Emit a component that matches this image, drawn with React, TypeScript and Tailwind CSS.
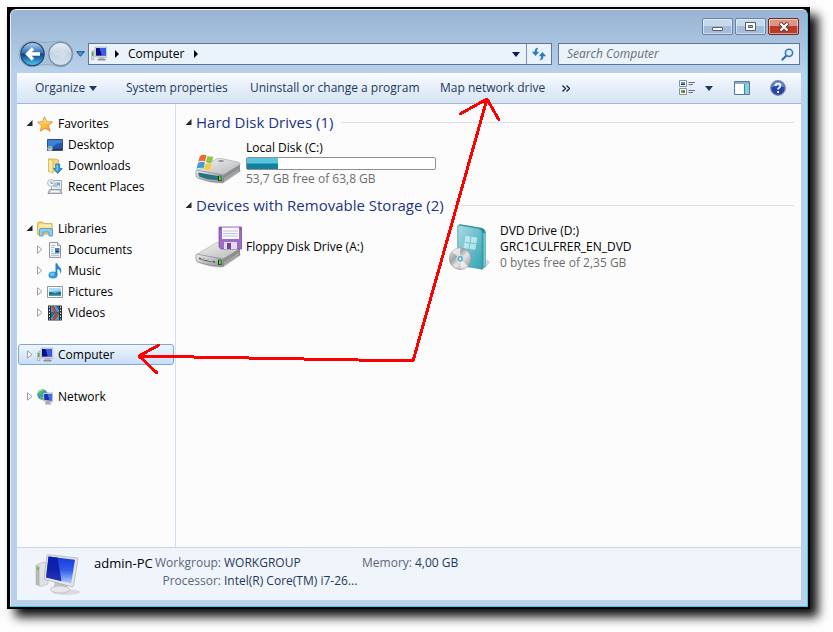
import type { ReactNode } from "react";

const Tri = ({ open = false }: { open?: boolean }) => (
  <svg className="shrink-0" width="7" height="9" viewBox="0 0 7 9" aria-hidden="true">
    {open ? (
      <path d="M6.500 1v6H.5z" fill="#262626" />
    ) : (
      <path d="M1.500 .8v7.400L6 4.500z" fill="#fff" stroke="#a0a0a0" />
    )}
  </svg>
);

const RightArrow = () => (
  <svg className="shrink-0" width="4" height="8" viewBox="0 0 4 8" aria-hidden="true">
    <path d="M0 0v8l4-4z" fill="#000" />
  </svg>
);

const DownArrow = ({ color }: { color: string }) => (
  <svg className="shrink-0" width="8" height="5" viewBox="0 0 8 5" aria-hidden="true">
    <path d="M0 0h8L4 5z" fill={color} />
  </svg>
);

const PcIcon = () => (
  <svg className="shrink-0" width="16" height="16" viewBox="0 0 16 16" aria-hidden="true">
    <path d="M.5 5.500 3 4v9.500H.5z" fill="#d8dadb" stroke="#9a9fa3" strokeWidth=".6" />
    <path d="M1 6h1.600v4H1z" fill="#4fb93a" />
    <path d="M8 11h5l1 3H7z" fill="#b9bcc0" />
    <path d="M6 13h9l-1 1.500H7z" fill="#8d9195" />
    <path d="M4 1h12l-.5 10.500L4.500 11z" fill="#d9dcdf" stroke="#a5aaaf" strokeWidth=".6" />
    <path d="M5 2h10v7.500L5 9.500z" fill="#1c27c4" />
    <path d="M8 2h7v7.500h-4z" fill="#3b5be4" />
    <path d="M5 2h3.500l2 7.500H5z" fill="#0a0f86" />
  </svg>
);

const StarIcon = () => (
  <svg className="shrink-0" width="16" height="16" viewBox="0 0 16 16" aria-hidden="true">
    <defs>
      <linearGradient id="star" x1="0" y1="0" x2="1" y2="1">
        <stop offset="0" stopColor="#fff0a0" />
        <stop offset=".5" stopColor="#fbc43c" />
        <stop offset="1" stopColor="#f3912a" />
      </linearGradient>
    </defs>
    <path d="M7.500 .8 9.700 5.700l5.800.3-4.200 3.600 1.900 5.600-5.200-3-4.600 3 1.200-5.500L.6 6.200l5-.5z" fill="url(#star)" stroke="#e98a2c" strokeWidth=".9" strokeLinejoin="round" />
    <path d="M7.500 3 8.700 6.500l4 .4" fill="none" stroke="#fff6c8" strokeWidth=".7" />
  </svg>
);

const DesktopIcon = () => (
  <svg className="shrink-0" width="16" height="16" viewBox="0 0 16 16" aria-hidden="true">
    <path d="M.5 2.500h15v11H.5z" fill="#2258b2" stroke="#35507c" />
    <path d="M1 3h14v3Q8 6 5 11H1z" fill="#3f7fd4" />
    <path d="M1 11.500h14V13H1z" fill="#273850" />
    <circle cx="3" cy="11.500" r="2.500" fill="#8ecdf0" />
    <path d="M1.500 10h1.300v1.300H1.500z" fill="#e5562e" />
    <path d="M3.200 10h1.300v1.300H3.200z" fill="#6db52f" />
    <path d="M3.200 11.800h1.300v1.300H3.200z" fill="#f4cf3a" />
  </svg>
);

const DownloadsIcon = () => (
  <svg className="shrink-0" width="16" height="16" viewBox="0 0 16 16" aria-hidden="true">
    <path d="M1.500 1h7l3 1V13l-10 .5z" fill="#f4d678" stroke="#cfa743" strokeWidth=".7" />
    <path d="M1.500 1 6 2.500v12.700L1.500 13.500z" fill="#fbe9a4" stroke="#d5b04e" strokeWidth=".7" />
    <path d="M8.700 6h4v4.500h2.600L10.700 15.500 6.500 10.500h2.200z" fill="#2f96df" stroke="#1b6db3" strokeWidth=".7" />
    <path d="M9.500 6.800h1.400v6.500L8.500 11h1z" fill="#7cc9f5" />
  </svg>
);

const RecentIcon = () => (
  <svg className="shrink-0" width="16" height="16" viewBox="0 0 16 16" aria-hidden="true">
    <path d="M4.500 1.500h10v10h-10z" fill="#e9f0f5" stroke="#8d9ba7" strokeWidth=".8" />
    <path d="M6 5h3M6 7h3" stroke="#7c95aa" />
    <path d="M9.500 3.500H13v5H9.500z" fill="#6ea3cf" />
    <path d="m9.500 8.500 2-3 1.500 3z" fill="#f0f8ff" />
    <path d="M2.500 10.500h11l1.500 4H1z" fill="#cbd1d6" stroke="#818a92" strokeWidth=".8" />
    <path d="M4 12.500h8" stroke="#f7f8f9" strokeWidth="1.500" />
    <circle cx="4" cy="4" r="3.400" fill="#f7fbff" stroke="#a3abb3" strokeWidth=".8" />
    <path d="M4 2v2.300h2" fill="none" stroke="#55738c" strokeWidth=".8" />
  </svg>
);

const LibrariesIcon = () => (
  <svg className="shrink-0" width="16" height="16" viewBox="0 0 16 16" aria-hidden="true">
    <path d="M.5 2.500 1.500 1h4l1 1.500H15l.5 10.500-15 .5z" fill="#f1cf6b" stroke="#c79d3b" strokeWidth=".7" />
    <path d="M2 3.500h12V6H2z" fill="#fff3bb" />
    <path d="M1 5.500h14v4H1z" fill="#f8df8b" />
    <path d="M2.500 15V9q0-1.500 1.500-1.500h10Q15.500 7.500 15.500 9v6h-3.500V11H6v4z" fill="#8ccdf0" stroke="#4795c6" strokeWidth=".8" />
  </svg>
);

const DocumentIcon = () => (
  <svg className="shrink-0" width="16" height="16" viewBox="0 0 16 16" aria-hidden="true">
    <path d="M2.500.6h8l3 3v11.800h-11z" fill="#fbfdff" stroke="#7e858d" strokeWidth=".9" />
    <path d="M10.500.6v3h3" fill="#dce3e9" stroke="#7e858d" strokeWidth=".8" />
    <path d="M4 3.500h4.500M4 5.500h3.500M4 7.500h2.500M4 9.500h2.500M4 11.500h8M4 13.300h8" stroke="#8fa7bf" strokeWidth=".8" />
    <path d="M8 6h4.500v4.500H8z" fill="#3f82c8" />
    <path d="m8 10.500 1.500-2 1.200 1 .8-.8 1 1.800z" fill="#173f77" />
  </svg>
);

const MusicIcon = () => (
  <svg className="shrink-0" width="16" height="16" viewBox="0 0 16 16" aria-hidden="true">
    <ellipse cx="6" cy="12" rx="4.500" ry="3.600" fill="#2c98dd" />
    <ellipse cx="5.200" cy="11.200" rx="2.600" ry="1.700" fill="#71c4f2" />
    <path d="M8.500.3h1.700q.3 2 2.200 3.600 3.400 2.800.8 7 .4-4-2.800-4.800V12H8.500z" fill="#2383cd" />
  </svg>
);

const PictureIcon = () => (
  <svg className="shrink-0" width="16" height="16" viewBox="0 0 16 16" aria-hidden="true">
    <path d="M.5 2.500h15v11H.5z" fill="#fff" stroke="#8f9aa3" />
    <path d="M2 4h12v8H2z" fill="#64b6e5" />
    <path d="M2 4h12v2.500q-5 0-12 2z" fill="#a9ddf5" />
    <path d="M2 8q4-.5 6 1.500 3-2 6-1.500v4H2z" fill="#246a7c" />
    <path d="M2 10.500h12V12H2z" fill="#3c9eb0" />
  </svg>
);

const VideoIcon = () => (
  <svg className="shrink-0" width="16" height="16" viewBox="0 0 16 16" aria-hidden="true">
    <path d="M1 .5h14v15H1z" fill="#2a3034" />
    <path d="M4 1h8v6.500H4zM4 8.500h8V15H4z" fill="#4b9bcb" />
    <path d="M4 1h3l3 6.500H7zM12 8.500 8 15H5l3-6.500z" fill="#a84e3d" />
    <path d="M9 1h3v4zM4 9v4l3-4z" fill="#235f91" />
    <path d="M2.500 1.500v13M13.500 1.500v13" stroke="#dfe5e8" strokeDasharray="1.500 1.500" />
  </svg>
);

const NetworkIcon = () => (
  <svg className="shrink-0" width="16" height="16" viewBox="0 0 16 16" aria-hidden="true">
    <circle cx="5.500" cy="5.500" r="5.200" fill="#299bd6" />
    <path d="M2 2q3-2.500 5-1 0 2-2 2.500L4 6 1 5.500Q1 3 2 2M3 7l4 1-1 2.500-3-1z" fill="#61bb3f" />
    <path d="M1.500 3.500Q3 1 5.500 1" fill="none" stroke="#d5f5dc" strokeWidth=".8" />
    <path d="M9 12h4l1 3.500H8z" fill="#a6abb0" />
    <path d="M6 4h9.700l-.4 9L6.500 12z" fill="#e0e3e6" stroke="#90979e" strokeWidth=".6" />
    <path d="M7 5h7.700l-.2 6.800L7.300 11z" fill="#1930bd" />
    <path d="M10.500 5h4.200l-.2 6.800-2-.3z" fill="#466be4" />
  </svg>
);

const DriveBody = ({ id }: { id: string }) => (
  <>
    <defs>
      <linearGradient id={id + "t"} x1="0" y1="0" x2="1" y2="1">
        <stop offset="0" stopColor="#f4f4f4" />
        <stop offset="1" stopColor="#b5b7b8" />
      </linearGradient>
      <linearGradient id={id + "f"} x1="0" y1="0" x2="1" y2="1">
        <stop offset="0" stopColor="#f0f0f0" />
        <stop offset="1" stopColor="#8d9092" />
      </linearGradient>
    </defs>
    <path d="M5 41q16 6 25 4l17-12-3-5z" fill="#000" opacity=".18" />
    <path d="M2 33 22 21q2-1 5-.5l17 3.500q2.500.5 2 3L29 37z" fill={`url(#${id}t)`} stroke="#a4a6a8" strokeWidth=".6" />
    <path d="m29 37 17-10.500v7L29 44.500z" fill="#8b8e90" />
    <path d="m30 41 15-9.500M30 43l15-9.500" stroke="#c6c8c9" strokeWidth=".7" />
    <path d="M2 33q0-1 1.500-.8L29 37v7.500q-13 0-25.500-4.500Q1.500 39 2 33z" fill={`url(#${id}f)`} stroke="#85888a" strokeWidth=".7" />
  </>
);

const HardDiskIcon = () => (
  <svg className="shrink-0" width="48" height="48" viewBox="0 1 48 48" aria-hidden="true">
    <DriveBody id="hd" />
    <path d="M4 34.500 24 38v4Q13 42 5 38.500z" fill="#2b7083" />
    <path d="M24 37.700h3.500V43H24z" fill="#1d3b18" />
    <path d="M25 38.300h1.800v4H25z" fill="#55dc35" />
    <ellipse cx="27" cy="23" rx="3" ry="1" fill="#8d9193" />
    <path d="M6 18q3.500-2 6.500-.5L11 23.500q-3.500-1.500-7 .5z" fill="#ed6a31" />
    <path d="M13.500 18q3 1.500 6 .3l-1.700 6q-3 1.500-6-.3z" fill="#8fc63f" />
    <path d="M4 25q3.500-2 7-.5l-1.700 6q-3-1.500-6.800.5z" fill="#4299d9" />
    <path d="M11.800 25q3 1.800 6 .3l-1.700 6q-3 1.500-6-.3z" fill="#fbcb3c" />
  </svg>
);

const FloppyIcon = () => (
  <svg className="shrink-0" width="48" height="48" viewBox="0 1 48 48" aria-hidden="true">
    <DriveBody id="fd" />
    <path d="m5 35.500 16 3.700v1.500Q12 40 5 37z" fill="#55595b" />
    <path d="m7 36.500 12 2.700" stroke="#d7d9da" />
    <path d="M24 37.700h3.500V43H24z" fill="#1d3b18" />
    <path d="M25 38.300h1.800v4H25z" fill="#55dc35" />
    <path d="M25 5h22.500v22H27l-2-2z" fill="#9f6cc4" stroke="#74459a" strokeWidth=".7" />
    <path d="M28 5.500h17V17H28z" fill="#f8f7fb" />
    <path d="M29 9h15M29 11.500h15M29 14h15" stroke="#bfc5de" />
    <path d="M30 20h13v7H30z" fill="#e1dde8" />
    <path d="M33 21h4v6h-4z" fill="#704594" />
    <path d="M26 7h1M46 7h1" stroke="#513070" />
  </svg>
);

const DvdIcon = () => (
  <svg className="shrink-0" width="48" height="48" viewBox="-1 -1 49 49" aria-hidden="true">
    <defs>
      <linearGradient id="box" x1="0" y1="0" x2="1" y2="1">
        <stop offset="0" stopColor="#a8dde5" />
        <stop offset=".5" stopColor="#6dbfcc" />
        <stop offset="1" stopColor="#2ea6b0" />
      </linearGradient>
      <linearGradient id="disc" x1="0" y1="0" x2="1" y2="1">
        <stop offset="0" stopColor="#f8f8f8" />
        <stop offset=".35" stopColor="#a2a4a6" />
        <stop offset=".55" stopColor="#e6e6e6" />
        <stop offset="1" stopColor="#85888b" />
      </linearGradient>
    </defs>
    <path d="m36 46 6-7-3-3-9 8z" fill="#000" opacity=".15" />
    <path d="M9 2q1-2 4-1.500l20 3.300q4 1 4.500 5V43L33 47z" fill="#2b8e9a" />
    <path d="M9 2.500q0-1.500 2-1.200L30 4.500q4 1 4 5V46L9 42z" fill="url(#box)" stroke="#3d98a8" strokeWidth=".8" />
    <path d="m35 9 2.500 1v32L35 45z" fill="#70c8d0" />
    <path d="m17 12 5 .8-1 6-5-.8zM23 13l6 .8-1 6-6-.8zM15.800 19l5 .8-1 5.500-5-.8zM21.800 20l6 .8-1 5.500-6-.8z" fill="#e3f8fa" opacity=".65" />
    <circle cx="11.500" cy="35.500" r="11" fill="url(#disc)" stroke="#929699" strokeWidth=".7" />
    <path d="m11.500 35.500-8-7q3-4 8-4zM11.500 35.500l8 7.500q-3 3-7 3z" fill="#fff" opacity=".65" />
    <circle cx="11.500" cy="35.500" r="3.500" fill="#62aebf" stroke="#dce8eb" />
    <circle cx="11.500" cy="35.500" r="1.200" fill="#e8f5f8" />
  </svg>
);

const BigPcIcon = () => (
  <svg className="shrink-0" width="48" height="44" viewBox="0 0 48 44" aria-hidden="true">
    <defs>
      <linearGradient id="scr" x1="0" y1="0" x2="0" y2="1">
        <stop offset="0" stopColor="#1738dc" />
        <stop offset=".5" stopColor="#315de7" />
        <stop offset="1" stopColor="#b3ccff" />
      </linearGradient>
    </defs>
    <ellipse cx="31" cy="38" rx="14" ry="3" fill="#000" opacity=".1" />
    <path d="m1 11 7-3 5 1v21l-7 2.500-5-2z" fill="#dfe1e2" stroke="#b4b7b9" strokeWidth=".6" />
    <path d="m1 11 3.500 1v20L1 30.500z" fill="#b4b7b9" />
    <circle cx="2.800" cy="14.500" r="1.300" fill="#57cc2e" />
    <path d="M20 27h11l2 9H18z" fill="#c2c5c7" />
    <ellipse cx="25" cy="35.500" rx="9.500" ry="3.500" fill="#e6e8e9" stroke="#b0b3b5" strokeWidth=".6" />
    <path d="M12 1.500q0-1 1.500-.8L42 4q1 0 .8 1.500L38.500 32q-.3 1-1.500.8L10 25.500q-1-.3-.8-1.500z" fill="#e4e6e7" stroke="#a9adb0" strokeWidth=".7" />
    <path d="m13.500 2.500 26.500 3.300-3.800 23.700L11 23.500z" fill="url(#scr)" />
    <path d="m13.500 2.500 9 1.100q2 11 4 23.600L11 23.500z" fill="#0715a0" opacity=".8" />
  </svg>
);

interface NodeProps {
  icon: ReactNode;
  label: string;
  open?: boolean;
  leaf?: boolean;
  child?: boolean;
  selected?: boolean;
}

const TreeNode = ({ icon, label, open, leaf, child, selected }: NodeProps) => (
  <li>
    <button
      type="button"
      className={
        "flex h-[21px] w-full items-center gap-[5px] rounded-[3px] border pr-2 text-left whitespace-nowrap " +
        (child ? "pl-[17px] " : "pl-[7px] ") +
        (selected ? "border-[#7da7d9] bg-linear-to-b from-[#eef5fe] to-[#c9def7]" : "border-transparent")
      }
    >
      <span className="flex w-[6px] shrink-0">{!leaf && <Tri open={open} />}</span>
      {icon}
      <span>{label}</span>
    </button>
  </li>
);

const GroupTitle = ({ children }: { children: ReactNode }) => (
  <h2 className="flex h-[22px] items-center gap-[4px] pb-[2px] text-[15px] whitespace-nowrap text-[#1e3287]">
    <Tri open />
    {children}
    <span className="ml-[4px] h-px flex-1 bg-[#dfe2e8]" />
  </h2>
);

const caption = "flex h-[17px] w-[31px] items-center justify-center rounded-[2px] border shadow-[inset_0_0_0_1px_rgba(255,255,255,0.5)]";

export default function App() {
  return (
    <div className="relative flex min-h-screen flex-col bg-[#fefefe] pt-[7px] pr-[23px] pb-[23px] pl-[7px] font-['Open_Sans','Noto_Sans',sans-serif] text-[12px] leading-[16px] text-black">
      <div className="flex flex-1 flex-col bg-black pt-[2px] pr-[2px] pb-[2px] pl-[3px] shadow-[8px_8px_10px_rgba(0,0,0,0.95)]">
        <div className="flex flex-1 flex-col rounded-t-[6px] border border-t-[#eef6fd] border-r-[#35c9ea] border-b-[#35c9ea] border-l-[#e4effa] bg-[#b9d1ea] px-[6px] pb-[6px]">
          <header className="-mx-[6px] rounded-t-[5px] bg-linear-to-b from-[#98b4d3] to-[#b9d1ea] px-[6px]">
            <div className="flex justify-end gap-[2px] pt-[8px] pr-[2px]">
              <button type="button" aria-label="Minimize" className={caption + " border-[#6683a5] bg-linear-to-b from-[#c7d9ec] from-50% to-[#a3bdd9] to-50%"}>
                <span className="mt-[5px] h-[4px] w-[11px] rounded-[1px] border border-[#555d68] bg-white" />
              </button>
              <button type="button" aria-label="Maximize" className={caption + " border-[#6683a5] bg-linear-to-b from-[#c7d9ec] from-50% to-[#a3bdd9] to-50%"}>
                <svg width="11" height="9" viewBox="0 0 11 9"><path d="M.5.500h10v8H.5z" fill="#fff" stroke="#555d68" /><path d="M3.500 3.500h4v2h-4z" fill="#a3bdd9" stroke="#555d68" /></svg>
              </button>
              <button type="button" aria-label="Close" className={caption + " border-[#6d2a2a] bg-linear-to-b from-[#dd9587] from-50% to-[#bf3a24] to-50%"}>
                <svg width="12" height="10" viewBox="0 0 12 10"><path d="m2 1 8 8m0-8L2 9" stroke="#5a3a3e" strokeWidth="4" /><path d="m2.500 1.500 7 7m0-7-7 7" stroke="#fff" strokeWidth="2.200" /></svg>
              </button>
            </div>
            <div className="flex h-[38px] items-center pr-[1px]">
              <div className="flex items-center">
                <svg width="58" height="28" viewBox="0 0 58 28" className="ml-[1px]" aria-hidden="true">
                  <defs>
                    <linearGradient id="back" x1="0" y1="0" x2="0" y2="1">
                      <stop offset="0" stopColor="#b4d3f0" />
                      <stop offset=".46" stopColor="#2e6db8" />
                      <stop offset=".52" stopColor="#0d4591" />
                      <stop offset="1" stopColor="#4fcdf8" />
                    </linearGradient>
                    <linearGradient id="fwd" x1="0" y1="0" x2="0" y2="1">
                      <stop offset="0" stopColor="#e8f0f8" />
                      <stop offset=".5" stopColor="#c4d3e2" />
                      <stop offset="1" stopColor="#d6e4f1" />
                    </linearGradient>
                  </defs>
                  <path d="M14 1Q28 4 42 1a13 13 0 0 1 0 26Q28 22 14 27a13 13 0 0 1 0-26" fill="#a9c0da" stroke="#8ba3bf" strokeWidth=".8" />
                  <circle cx="14.500" cy="14" r="11.700" fill="url(#back)" stroke="#28496f" strokeWidth="1.200" />
                  <circle cx="42.500" cy="14" r="11.700" fill="url(#fwd)" stroke="#768ba3" strokeWidth="1.200" />
                  <path d="M22 14H10m5-5.500L9.500 14l5.500 5.500" fill="none" stroke="#fff" strokeWidth="3.400" />
                  <path d="M36 14h11m-5-5 5 5-5 5" fill="none" stroke="#d5dfe9" strokeWidth="2.500" />
                </svg>
                <svg width="9" height="6" viewBox="0 0 9 6" aria-hidden="true"><path d="M.7.700h7.600L4.500 5.300z" fill="#3b9bd0" stroke="#174f81" /></svg>
              </div>
              <nav aria-label="Address" className="ml-[3px] flex h-[22px] min-w-0 flex-1 items-center border border-[#5d7795] bg-[#eaf2fb] pl-[2px]">
                <PcIcon />
                <span className="ml-[8px]"><RightArrow /></span>
                <button type="button" className="mx-[9px]">Computer</button>
                <RightArrow />
                <button type="button" aria-label="Previous locations" className="ml-auto px-[6px]"><DownArrow color="#101a50" /></button>
                <button type="button" aria-label="Refresh" className="flex h-full w-[25px] items-center justify-center border-l border-[#7b92ad]">
                  <svg width="16" height="16" viewBox="0 0 14 14"><path d="M6.500 1.500Q3 1.500 3.200 5H.8L4 8.800 7.200 5H5Q5 3 6.500 1.500" fill="#297ac4" /><path d="M7.500 12.500q3.500 0 3.300-3.500h2.400L10 5.200 6.800 9H9q0 2-1.500 3.500" fill="#297ac4" /></svg>
                </button>
              </nav>
              <label className="ml-[6px] flex h-[22px] w-[242px] items-center border border-[#5d7795] bg-[#eaf2fb] pr-[5px] pl-[8px]">
                <input type="search" aria-label="Search Computer" placeholder="Search Computer" className="min-w-0 flex-1 bg-transparent italic outline-none placeholder:text-[#6c6f73]" />
                <svg width="13" height="13" viewBox="0 0 13 13" aria-hidden="true"><path d="M6 7 1.500 11.500" stroke="#2d6fb4" strokeWidth="2.200" strokeLinecap="round" /><circle cx="8" cy="4.800" r="3.600" fill="#e4f1fc" stroke="#3279bd" strokeWidth="1.600" /></svg>
              </label>
            </div>
          </header>

          <div className="flex h-[31px] shrink-0 items-center border-b border-[#9fb6d6] bg-linear-to-b from-[#fafcff] via-[#e5eefa] via-50% to-[#d8e4f3] pr-[15px] pl-[18px] whitespace-nowrap text-[#1e395b]">
            <button type="button" className="flex w-[91px] items-center gap-[4px]">Organize <DownArrow color="#1e395b" /></button>
            <button type="button" className="w-[124px] text-left">System properties</button>
            <button type="button" className="w-[190px] text-left">Uninstall or change a program</button>
            <button type="button" className="w-[122px] text-left">Map network drive</button>
            <button type="button" aria-label="More commands">
              <svg width="8" height="7" viewBox="0 0 8 7"><path d="m.5.500 3 3-3 3m4-6 3 3-3 3" fill="none" stroke="#102448" strokeWidth="1.300" /></svg>
            </button>
            <button type="button" aria-label="Change your view" className="ml-auto flex items-center gap-[9px]">
              <svg width="17" height="16" viewBox="0 0 17 16"><path d="M.5.500h7v6h-7zM.5 8.500h7v6h-7z" fill="#fff" stroke="#84919e" /><path d="M2 2h4v3H2z" fill="#4a97d3" /><path d="M2 4h4v1H2z" fill="#183c4c" /><path d="M2 10h2v3H2z" fill="#4bb32f" /><path d="M4 10h2v3H4z" fill="#d7642c" /><path d="M4 11h2v1H4z" fill="#3659ce" /><path d="M9.500 2.500H16M9.500 4.500H14M9.500 10.500H16M9.500 12.500H14" stroke="#64707c" /></svg>
              <DownArrow color="#1e395b" />
            </button>
            <button type="button" aria-label="Show the preview pane" className="ml-[21px]">
              <svg width="16" height="14" viewBox="0 0 16 14"><path d="M.5.500h15v13H.5z" fill="#fff" stroke="#587796" /><path d="M1 1h14v2H1z" fill="#8faecb" /><path d="M10 3h5v10h-5z" fill="#7fd0e4" /><path d="M10.500 3v10" stroke="#388ca9" /></svg>
            </button>
            <button type="button" aria-label="Get help" className="ml-[20px]">
              <svg width="16" height="16" viewBox="0 0 16 16"><circle cx="8" cy="8" r="7.300" fill="#2445a8" stroke="#7f8ca8" strokeWidth="1.300" /><path d="M2 7a6 5.500 0 0 1 12 0q-6-2-12 0" fill="#6d8fe0" /><path d="M5.500 6q.2-2.300 2.600-2.300 2.300 0 2.300 2 0 1.200-1.300 2Q8 8.500 8 9.500M8 11v2" fill="none" stroke="#fff" strokeWidth="1.800" /></svg>
            </button>
          </div>

          <div className="flex flex-1 bg-[#fcfcfc]">
            <nav aria-label="Folders" className="w-[159px] shrink-0 border-r border-[#d0dff2] pt-[9px] pr-[1px] pl-[1px]">
              <ul className="flex flex-col gap-[21px]">
                <li>
                  <ul>
                    <TreeNode open icon={<StarIcon />} label="Favorites" />
                    <TreeNode leaf child icon={<DesktopIcon />} label="Desktop" />
                    <TreeNode leaf child icon={<DownloadsIcon />} label="Downloads" />
                    <TreeNode leaf child icon={<RecentIcon />} label="Recent Places" />
                  </ul>
                </li>
                <li>
                  <ul>
                    <TreeNode open icon={<LibrariesIcon />} label="Libraries" />
                    <TreeNode child icon={<DocumentIcon />} label="Documents" />
                    <TreeNode child icon={<MusicIcon />} label="Music" />
                    <TreeNode child icon={<PictureIcon />} label="Pictures" />
                    <TreeNode child icon={<VideoIcon />} label="Videos" />
                  </ul>
                </li>
                <TreeNode selected icon={<PcIcon />} label="Computer" />
                <TreeNode icon={<NetworkIcon />} label="Network" />
              </ul>
            </nav>

            <main className="min-w-0 flex-1 pt-[8px] pr-[7px] pl-[9px]">
              <GroupTitle>Hard Disk Drives (1)</GroupTitle>
              <div className="mt-[5px] mb-[8px] ml-[9px] flex items-center gap-[4px]">
                <HardDiskIcon />
                <div className="w-[190px]">
                  <p>Local Disk (C:)</p>
                  <div role="meter" aria-label="Used space" aria-valuenow={16} className="mt-[1px] mb-[1px] h-[13px] rounded-[2px] border border-[#8f8f8f] bg-white">
                    <div className="h-full w-[31px] bg-linear-to-b from-[#57c5dd] from-45% to-[#13819d] to-55%" />
                  </div>
                  <p className="text-[#6d6d6d]">53,7 GB free of 63,8 GB</p>
                </div>
              </div>
              <GroupTitle>Devices with Removable Storage (2)</GroupTitle>
              <div className="mt-[6px] ml-[9px] grid grid-cols-[254px_254px]">
                <div className="flex items-center gap-[4px]">
                  <FloppyIcon />
                  <p>Floppy Disk Drive (A:)</p>
                </div>
                <div className="flex items-center gap-[4px]">
                  <DvdIcon />
                  <div>
                    <p>DVD Drive (D:)</p>
                    <p>GRC1CULFRER_EN_DVD</p>
                    <p className="text-[#6d6d6d]">0 bytes free of 2,35 GB</p>
                  </div>
                </div>
              </div>
            </main>
          </div>

          <footer className="flex h-[53px] shrink-0 items-start border-t border-[#c9d7e8] bg-[#f0f4fb] pt-[6px] pl-[18px] leading-[18px] whitespace-nowrap text-[#1e395b]">
            <BigPcIcon />
            <strong className="ml-[11px] w-[64px] text-[13px] font-normal text-black">admin-PC</strong>
            <dl className="grid grid-cols-[63px_134px_51px_auto] gap-x-[3px]">
              <dt className="justify-self-end text-[#5a6779]">Workgroup:</dt>
              <dd>WORKGROUP</dd>
              <dt className="justify-self-end text-[#5a6779]">Memory:</dt>
              <dd>4,00 GB</dd>
              <dt className="justify-self-end text-[#5a6779]">Processor:</dt>
              <dd>Intel(R) Core(TM) i7-26...</dd>
            </dl>
          </footer>
        </div>
      </div>

      <svg className="pointer-events-none absolute top-0 left-0" width="520" height="400" viewBox="0 0 520 400" fill="none" stroke="#fe0000" strokeWidth="3" strokeLinecap="round" strokeLinejoin="round" shapeRendering="crispEdges" aria-hidden="true">
        <path d="m159 345-20 11 18 17M139 356l274 5 74-262M460 114l27-15 12 21" />
      </svg>
    </div>
  );
}
